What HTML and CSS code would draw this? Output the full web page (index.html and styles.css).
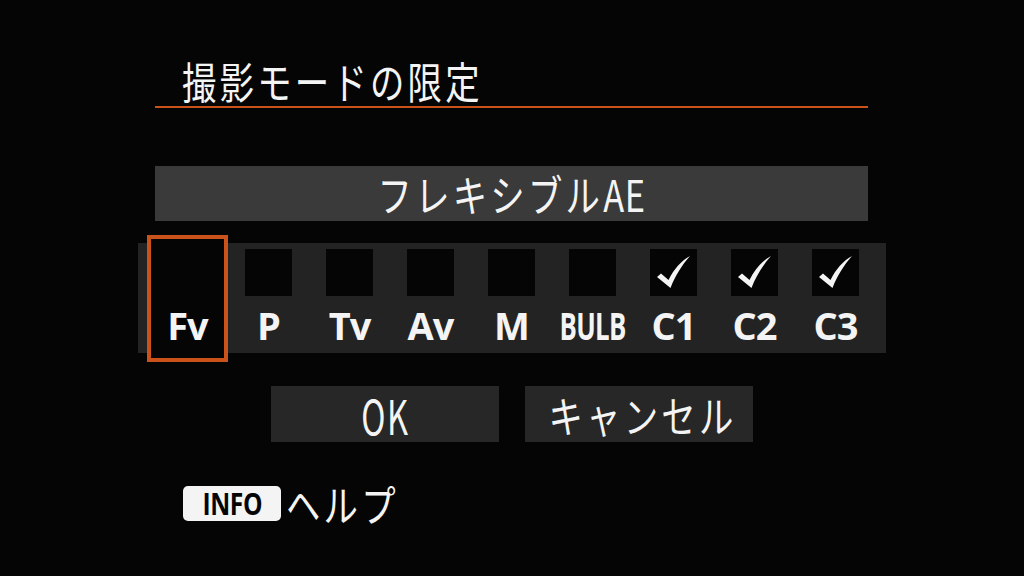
FILE: index.html
```html
<!DOCTYPE html>
<html lang="ja">
<head>
<meta charset="utf-8">
<title>撮影モードの限定</title>
<link rel="stylesheet" href="styles.css">
</head>
<body>
<div class="screen">
  <div class="header"><h1 class="title"><span class="cond">撮影モードの限定</span></h1></div>
  <div class="summary"><span class="cond">フレキシブル<span class="latin">AE</span></span></div>
  <div class="modes">
    <div class="cell selected"><div class="check"></div><div class="label">Fv</div></div>
    <div class="cell"><div class="check"></div><div class="label">P</div></div>
    <div class="cell"><div class="check"></div><div class="label">Tv</div></div>
    <div class="cell"><div class="check"></div><div class="label">Av</div></div>
    <div class="cell"><div class="check"></div><div class="label">M</div></div>
    <div class="cell"><div class="check"></div><div class="label"><span class="narrow">BULB</span></div></div>
    <div class="cell"><div class="check"><svg viewBox="0 0 47 47" class="tick"><path d="M7 28 L11 24.5 L18.5 31 C24 20 31 12 40 7 C32 16 25 27 20.5 39 Z"/></svg></div><div class="label">C1</div></div>
    <div class="cell"><div class="check"><svg viewBox="0 0 47 47" class="tick"><path d="M7 28 L11 24.5 L18.5 31 C24 20 31 12 40 7 C32 16 25 27 20.5 39 Z"/></svg></div><div class="label">C2</div></div>
    <div class="cell"><div class="check"><svg viewBox="0 0 47 47" class="tick"><path d="M7 28 L11 24.5 L18.5 31 C24 20 31 12 40 7 C32 16 25 27 20.5 39 Z"/></svg></div><div class="label">C3</div></div>
  </div>
  <div class="actions">
    <div class="btn"><span class="cond ok">OK</span></div>
    <div class="btn"><span class="cond">キャンセル</span></div>
  </div>
  <div class="help"><span class="badge"><span class="badge-text">INFO</span></span><span class="help-text"><span class="cond">ヘルプ</span></span></div>
</div>
</body>
</html>
```
FILE: styles.css
```css
html, body {
  margin: 0;
  padding: 0;
  background: #050505;
}
.screen {
  width: 1024px;
  height: 576px;
  box-sizing: border-box;
  padding-top: 60px;
  background: #050505;
  color: #f4f4f4;
  font-family: "Noto Sans CJK JP", "Noto Sans", sans-serif;
  font-weight: 400;
  display: flex;
  flex-direction: column;
  overflow: hidden;
}
.cond {
  display: inline-block;
  transform: scaleX(0.8);
  letter-spacing: 4px;
  white-space: nowrap;
}
.latin {
  letter-spacing: 1px;
}
.header {
  margin-left: 155px;
  width: 713px;
  box-sizing: border-box;
  padding-left: 27px;
  padding-bottom: 6px;
  border-bottom: 2px solid #c9531a;
}
.title {
  margin: 0;
  font-size: 43px;
  line-height: 40px;
  font-weight: 400;
}
.title .cond {
  transform-origin: left center;
}
.summary {
  margin-top: 58px;
  margin-left: 155px;
  width: 713px;
  height: 55px;
  background: #3a3a3a;
  text-align: center;
  font-size: 43px;
  line-height: 55px;
}
.modes {
  margin-top: 22px;
  margin-left: 138px;
  width: 748px;
  height: 110px;
  box-sizing: border-box;
  padding-left: 9px;
  background: #232323;
  display: flex;
  align-items: center;
}
.cell {
  flex: 0 0 81px;
  width: 81px;
  height: 127px;
  box-sizing: border-box;
  padding-top: 14px;
  display: flex;
  flex-direction: column;
  align-items: center;
}
.cell.selected {
  background: #050505;
  border: 4px solid #c9531a;
  padding-top: 10px;
}
.check {
  width: 47px;
  height: 47px;
  background: #050505;
}
.tick {
  display: block;
  width: 47px;
  height: 47px;
  fill: #f4f4f4;
}
.label {
  margin-top: 10px;
  font-family: "Open Sans", "Liberation Sans", sans-serif;
  font-weight: 700;
  font-size: 38px;
  line-height: 38px;
  letter-spacing: -1px;
  white-space: nowrap;
}
.narrow {
  display: inline-block;
  transform: scaleX(0.68);
}
.actions {
  margin-top: 33px;
  display: flex;
  justify-content: center;
  gap: 26px;
}
.btn {
  width: 228px;
  height: 56px;
  background: #272727;
  text-align: center;
  font-size: 43px;
  line-height: 56px;
}
.btn .ok {
  font-size: 48px;
  letter-spacing: 2px;
  transform: scaleX(0.68);
}
.help {
  margin-top: 41px;
  margin-left: 183px;
  display: flex;
  align-items: center;
  gap: 5px;
}
.badge {
  width: 98px;
  height: 35px;
  background: #f4f4f4;
  border-radius: 5px;
  color: #050505;
  font-family: "Open Sans", "Liberation Sans", sans-serif;
  font-weight: 700;
  font-size: 30px;
  line-height: 35px;
  text-align: center;
}
.badge-text {
  display: inline-block;
  transform: scaleX(0.82);
  letter-spacing: -0.5px;
}
.help-text {
  font-size: 43px;
  line-height: 40px;
}
.help-text .cond {
  transform-origin: left center;
}
```
